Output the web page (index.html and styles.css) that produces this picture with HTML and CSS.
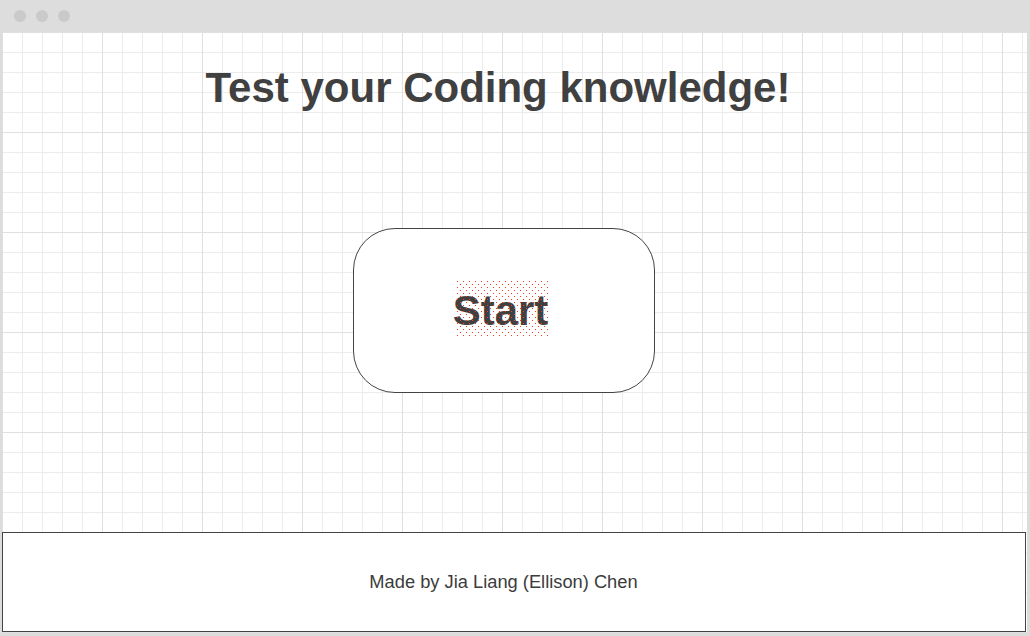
FILE: index.html
```html
<!DOCTYPE html>
<html lang="en">
<head>
<meta charset="utf-8">
<title>Coding Quiz</title>
<link rel="stylesheet" href="styles.css">
</head>
<body>
<div class="window">
  <div class="titlebar">
    <span class="dot"></span><span class="dot"></span><span class="dot"></span>
  </div>
  <div class="page">
    <div class="column">
      <h1 class="title">Test your Coding knowledge!</h1>
      <button class="start-btn" type="button"><span class="start-label">Start</span></button>
    </div>
    <footer class="footer">
      <p class="credit">Made by Jia Liang (Ellison) Chen</p>
    </footer>
  </div>
</div>
</body>
</html>
```

FILE: styles.css
```css
html, body {
  margin: 0;
  padding: 0;
}
body {
  background: #dcdcdc;
  font-family: "Liberation Sans", Arial, sans-serif;
  color: #404040;
}
.window {
  width: 1030px;
  height: 636px;
  display: flex;
  flex-direction: column;
}
.titlebar {
  height: 32px;
  flex: none;
  background: #dddddd;
  display: flex;
  align-items: center;
  gap: 10px;
  padding-left: 14px;
  box-sizing: border-box;
}
.dot {
  width: 12px;
  height: 12px;
  border-radius: 50%;
  background: #cacaca;
}
.page {
  flex: 1;
  margin: 0 3px 3px 2px;
  background-color: #ffffff;
  background-image:
    linear-gradient(to right, #e0e0e0 1px, transparent 1px),
    linear-gradient(to bottom, #e0e0e0 1px, transparent 1px),
    linear-gradient(to right, #ececec 1px, transparent 1px),
    linear-gradient(to bottom, #ececec 1px, transparent 1px);
  background-size: 100px 100px, 100px 100px, 20px 20px, 20px 20px;
  display: flex;
  flex-direction: column;
}
.column {
  width: 1003px;
  display: flex;
  flex-direction: column;
  align-items: center;
}
.title {
  margin: 32px 11px 0 0;
  font-size: 42px;
  font-weight: bold;
  line-height: 48px;
  color: #404040;
}
.start-btn {
  margin-top: 116px;
  width: 302px;
  height: 165px;
  border: 1px solid #444444;
  border-radius: 42px;
  background: #ffffff;
  font-family: "Liberation Sans", Arial, sans-serif;
  font-size: 42px;
  font-weight: bold;
  color: #404040;
  padding: 0 6px 0 0;
  display: flex;
  align-items: center;
  justify-content: center;
}
.start-label {
  position: relative;
  line-height: 48px;
}
.start-label::after {
  content: "";
  position: absolute;
  left: 3px;
  top: -7px;
  width: 92px;
  height: 58px;
  background-image:
    radial-gradient(circle at 1.5px 1.5px, #ff3b1f 0.9px, transparent 0.95px),
    radial-gradient(circle at 1.5px 1.5px, #ff3b1f 0.9px, transparent 0.95px);
  background-size: 6px 6px, 6px 6px;
  background-position: 0 0, 3px 3px;
}
.footer {
  margin-top: auto;
  margin-bottom: 1px;
  width: 1024px;
  height: 100px;
  box-sizing: border-box;
  border: 1px solid #444444;
  background: #ffffff;
  display: flex;
  align-items: center;
}
.credit {
  margin: 0;
  width: 1001px;
  text-align: center;
  font-size: 18.3px;
  color: #3c3c3c;
}
```
